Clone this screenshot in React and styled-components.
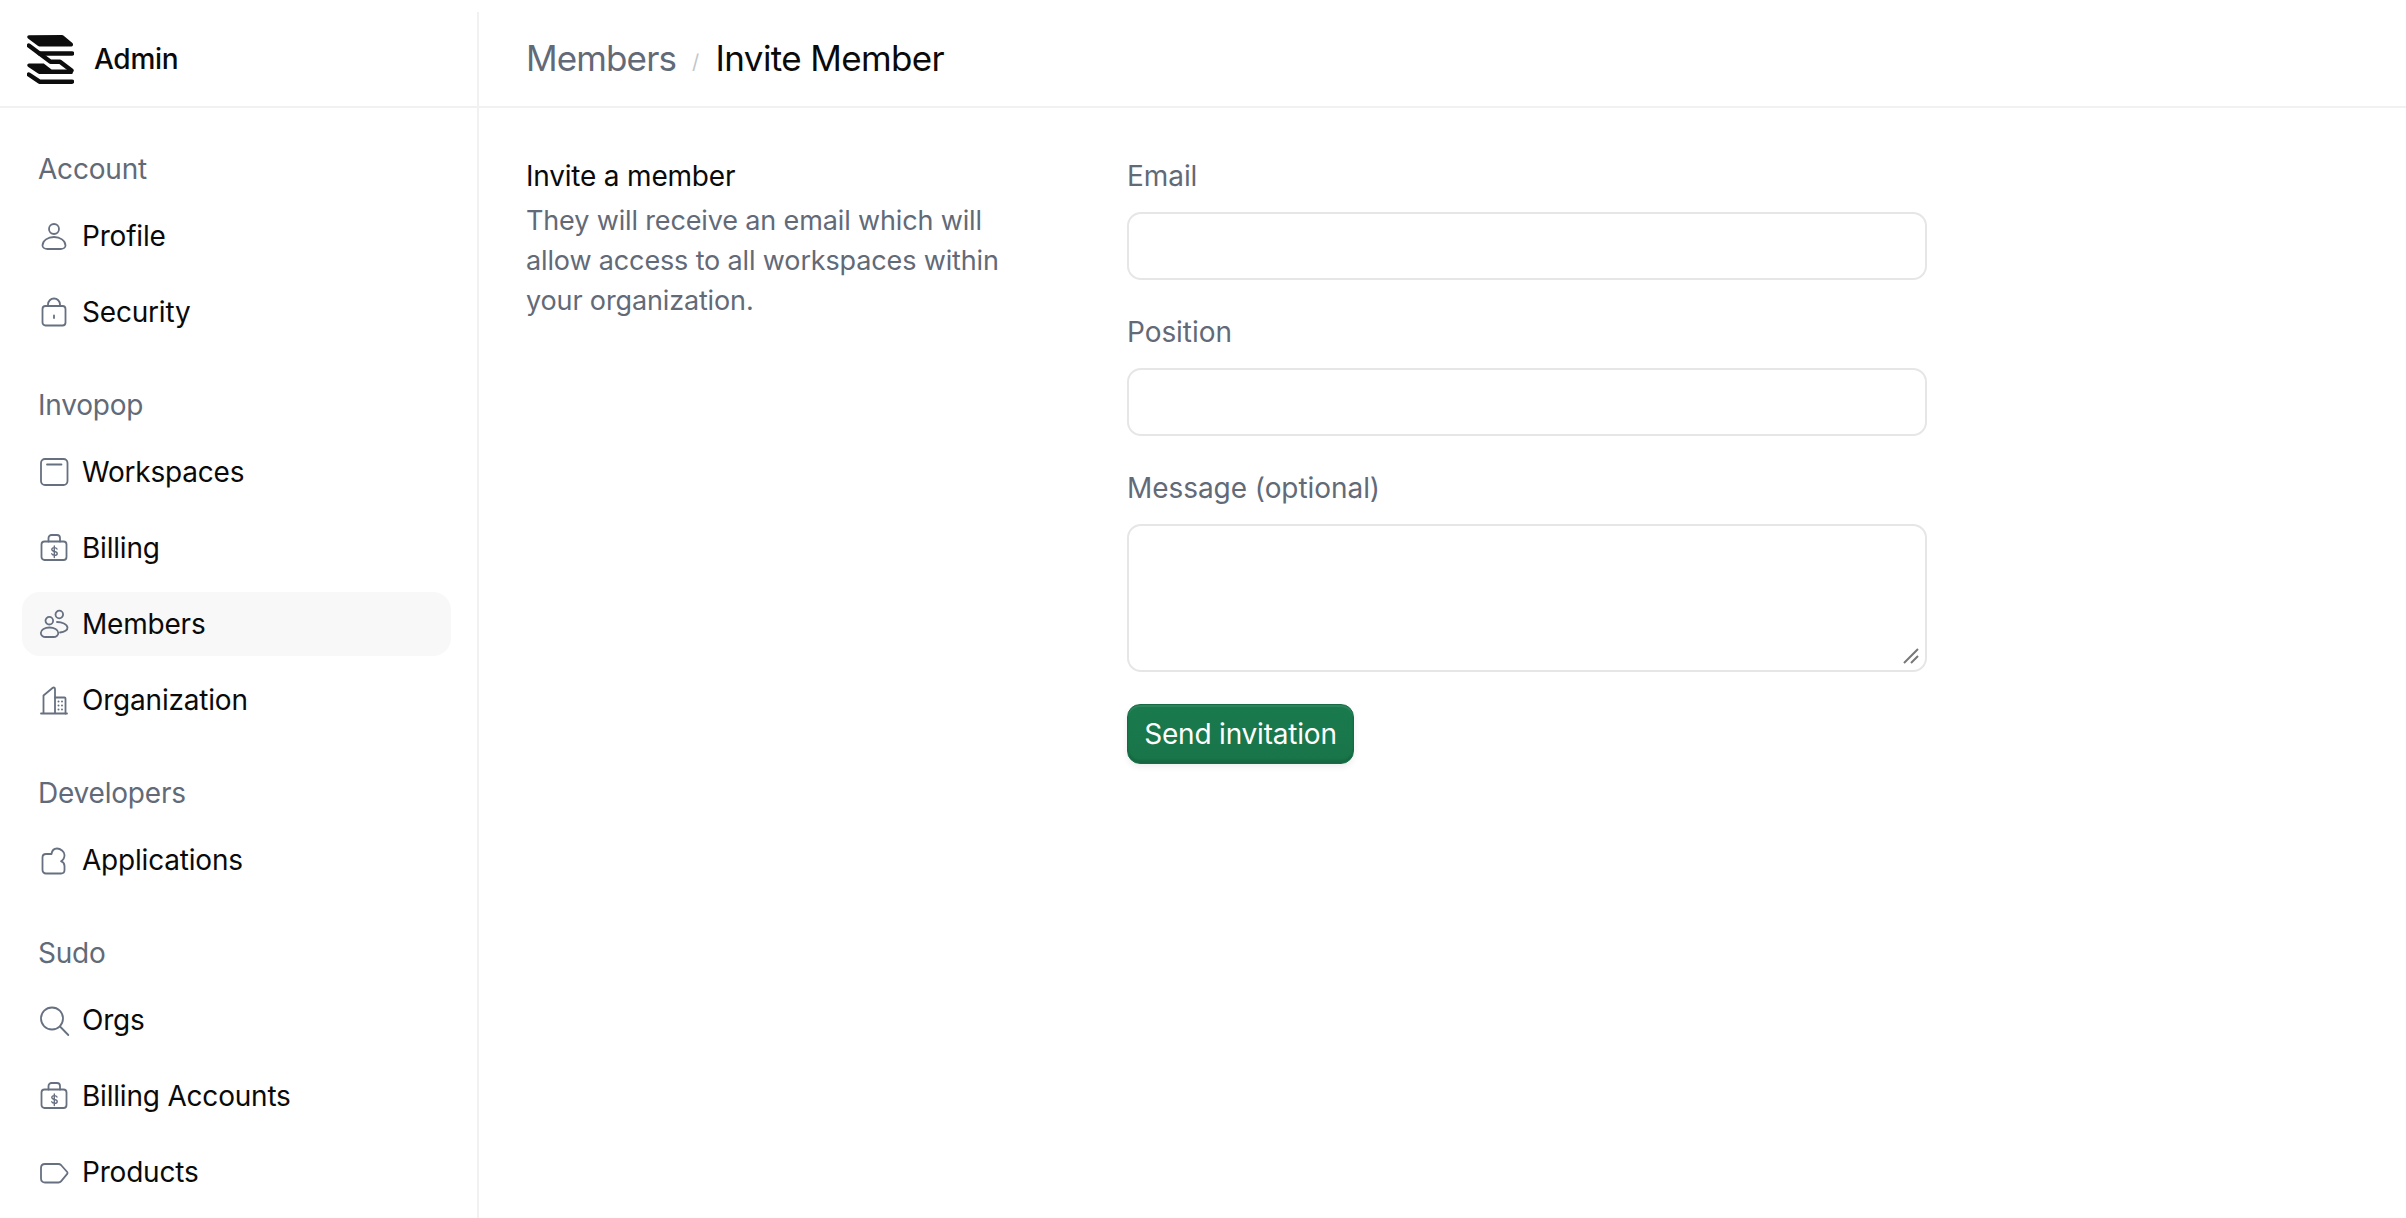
import React from "react";
import styled, { createGlobalStyle } from "styled-components";

const Global = createGlobalStyle`
  html, body { margin: 0; padding: 0; background: #fff; }
  body { font-family: Inter, "Liberation Sans", sans-serif; color: #0a0a0a; overflow: hidden; }
  * { box-sizing: border-box; }
`;

const Page = styled.div`
  display: flex;
  height: 1218px;
  overflow: hidden;
`;
const Sidebar = styled.aside`
  flex: 0 0 479px;
  margin-top: 12px;
  border-right: 2px solid #f1f1f2;
`;
const Brand = styled.div`
  height: 96px;
  padding: 23px 0 0 27px;
  display: flex;
  align-items: flex-start;
  gap: 20px;
  border-bottom: 2px solid #f1f1f2;
`;
const BrandName = styled.span`
  font-size: 28px;
  font-weight: 500;
  line-height: 48px;
  letter-spacing: -0.01em;
`;
const Nav = styled.nav`
  padding: 44px 26px 0 22px;
  display: flex;
  flex-direction: column;
  gap: 44px;
`;
const Section = styled.section`
  display: flex;
  flex-direction: column;
  gap: 12px;
`;
const SectionLabel = styled.div`
  height: 32px;
  line-height: 34px;
  padding-left: 16px;
  font-size: 28px;
  letter-spacing: -0.2px;
  color: #626a78;
  margin-bottom: 8px;
`;
const Item = styled.a`
  height: 64px;
  display: flex;
  align-items: center;
  gap: 14px;
  padding-left: 18px;
  border-radius: 18px;
  font-size: 28px;
  letter-spacing: -0.2px;
  color: #0a0a0a;
  background: ${(p) => (p.$active ? "#f8f8f8" : "transparent")};
`;
const Glyph = styled.svg`
  width: 28px;
  height: 28px;
  flex: none;
  fill: none;
  overflow: visible;
  stroke: #667080;
  stroke-width: 1.8;
  stroke-linecap: round;
  stroke-linejoin: round;
`;
const Main = styled.main`
  flex: 1;
  min-width: 0;
`;
const Topbar = styled.header`
  height: 108px;
  padding: 10px 47px 0;
  display: flex;
  align-items: center;
  border-bottom: 2px solid #f1f1f2;
  font-size: 35px;
  letter-spacing: -0.02em;
`;
const Crumb = styled.span`
  color: ${(p) => (p.$current ? "#0a0a0a" : "#626a78")};
  letter-spacing: ${(p) => (p.$current ? "-0.018em" : "-0.025em")};
`;
const Slash = styled.span`
  margin: 0 17px 0 16px;
  font-size: 20px;
  color: #c3c6cc;
  padding-top: 8px;
`;
const Content = styled.div`
  padding: 50px 47px 0;
  display: flex;
`;
const Intro = styled.div`
  flex: 0 0 601px;
`;
const IntroTitle = styled.h2`
  margin: 0;
  font-size: 28px;
  font-weight: 400;
  letter-spacing: -0.2px;
  line-height: 36px;
`;
const IntroText = styled.p`
  margin: 7px 0 0;
  width: 500px;
  font-size: 27px;
  letter-spacing: -0.14px;
  line-height: 40px;
  color: #626a78;
`;
const Form = styled.form`
  width: 800px;
  display: flex;
  flex-direction: column;
`;
const Label = styled.label`
  display: block;
  font-size: 28px;
  line-height: 36px;
  letter-spacing: -0.06px;
  color: #626a78;
  margin-bottom: 18px;
`;
const Field = styled.input`
  display: block;
  width: 100%;
  height: 68px;
  margin-bottom: 34px;
  border: 2px solid #e6e6e7;
  border-radius: 14px;
  background: #fff;
  outline: none;
`;
const AreaWrap = styled.div`
  position: relative;
  margin-bottom: 32px;
`;
const Area = styled.textarea`
  display: block;
  width: 100%;
  height: 148px;
  border: 2px solid #e6e6e7;
  border-radius: 14px;
  background: #fff;
  outline: none;
  resize: none;
`;
const Grip = styled.svg`
  position: absolute;
  right: 8px;
  bottom: 8px;
  width: 16px;
  height: 16px;
  stroke: #787878;
  stroke-width: 2;
  fill: none;
`;
const Submit = styled.button`
  align-self: flex-start;
  height: 60px;
  width: 227px;
  padding: 0;
  border: 1px solid #176b44;
  border-radius: 13px;
  background: linear-gradient(#197a4e, #187549);
  box-shadow: inset 0 2px 0 rgba(255, 255, 255, 0.08), inset 0 -3px 2px rgba(0, 0, 0, 0.12), 0 3px 6px rgba(0, 0, 0, 0.07);
  color: #fff;
  font-family: inherit;
  font-size: 28px;
  letter-spacing: -0.2px;
`;

const icons = {
  user: (
    <>
      <circle cx="14" cy="7" r="5" />
      <path d="M14 15c-6 0-11.500 3.500-11.500 8.500 0 2.200 2.500 3.500 5 3.500h13c2.500 0 5-1.300 5-3.500 0-5-5.500-8.500-11.500-8.500Z" />
    </>
  ),
  lock: (
    <>
      <rect x="2.500" y="8" width="23" height="19.500" rx="3" />
      <path d="M8 8V6.500a6 6 0 0 1 12 0V8M14 17.500v2.500" />
    </>
  ),
  window: (
    <>
      <rect x="1" y="1" width="26.500" height="26" rx="4" />
      <path d="M7 6.500h14.500" />
    </>
  ),
  billing: (
    <>
      <rect x="1.500" y="7.500" width="25" height="18.500" rx="3" />
      <path d="M8.500 7.500V4a3 3 0 0 1 3-3h5.500a3 3 0 0 1 3 3v3.500" />
      <path d="M17 15c-.5-1-1.500-1.400-2.700-1.400-1.500 0-2.500.7-2.500 1.900 0 2.600 5.400 1.300 5.400 3.900 0 1.200-1.200 1.900-2.700 1.900-1.200 0-2.300-.5-2.800-1.500M14.300 12v11.500" strokeWidth="1.400" />
    </>
  ),
  people: (
    <>
      <circle cx="19.300" cy="4.500" r="3.800" />
      <circle cx="9.300" cy="10.700" r="3.800" />
      <path d="M9.500 17.500c-4.500 0-8.700 2.200-8.700 5.500 0 2.500 2.500 4 4.500 4h8.500c2 0 4.500-1.500 4.500-4 0-3.300-4.300-5.500-8.800-5.500Z" />
      <path d="M17 12c5 0 10 2 10.500 5.500.3 2.500-3 4.500-7.500 5" />
    </>
  ),
  org: (
    <>
      <path d="M1 27.500h26M3.500 27.500V9.500L12.500 2c1.200-1 2.500-.4 2.500 1v24.500" />
      <path d="M15 11.500h9.500a1 1 0 0 1 1 1v15" />
      <path d="M18.500 15.500v.1M22 15.500v.1M18.500 19.500v.1M22 19.500v.1M18.500 23.500v.1M22 23.500v.1" strokeWidth="2" />
    </>
  ),
  app: (
    <path d="M6 8h5.500c.5-3.500 2.500-5.500 5.500-5.500 3.500 0 7.500 3 7.500 6.500 0 2.500-1 5-3.500 6.200 2.500 1 3.500 2.800 3.500 4.800v4c0 1.800-1.200 3.500-3.500 3.500H6c-2 0-3.500-1.500-3.500-3.500V11.500C2.500 9.500 4 8 6 8Z" />
  ),
  search: (
    <>
      <circle cx="12" cy="12.500" r="11" />
      <path d="M20 20.500 28.300 29" />
    </>
  ),
  tag: (
    <path d="M5 6h13.500c1 0 1.800.4 2.500 1l6.200 7c.5.600.5 1.300 0 1.900l-6.200 7.500c-.6.700-1.500 1.100-2.500 1.100H5c-2.500 0-4-1.500-4-4V10c0-2.500 1.500-4 4-4Z" />
  ),
};

const Icon = ({ name }) => <Glyph viewBox="0 0 28 28">{icons[name]}</Glyph>;

const Logo = () => (
  <svg width="47" height="50" viewBox="0 0 47 50" fill="#0d0d0d">
    <path d="M2 .3 35 0c.6 0 1 .2 1.400.5l9 7.500c1.200 1 .6 3.500-1 3.500H12.500c-.6 0-1-.1-1.400-.4L1 3.500C-.4 2.500.3.300 2 .3Z" />
    <path d="M1.800 10.500 12.500 18.500H45" fill="none" stroke="#0d0d0d" strokeWidth="4.400" strokeLinecap="round" strokeLinejoin="round" />
    <path d="M12.500 18.500 23.500 26.700h9.500L44.500 35.500" fill="none" stroke="#0d0d0d" strokeWidth="4.400" strokeLinecap="round" strokeLinejoin="round" />
    <path d="M2 28.500h14c.6 0 1 .1 1.400.4l6.500 5.100c.5.400.9.600 1.600.6H44.500c1.700 0 2 4.400 0 4.400H12.500c-.6 0-1-.1-1.400-.4L1 31.800C-.4 30.800.3 28.500 2 28.500Z" />
    <path d="M1.800 39.500 12.500 46.700H45" fill="none" stroke="#0d0d0d" strokeWidth="4.400" strokeLinecap="round" strokeLinejoin="round" />
  </svg>
);

const sections = [
  { title: "Account", items: [["user", "Profile"], ["lock", "Security"]] },
  { title: "Invopop", items: [["window", "Workspaces"], ["billing", "Billing"], ["people", "Members", true], ["org", "Organization"]] },
  { title: "Developers", items: [["app", "Applications"]] },
  { title: "Sudo", items: [["search", "Orgs"], ["billing", "Billing Accounts"], ["tag", "Products"]] },
];

export default function App() {
  return (
    <>
      <Global />
      <Page>
        <Sidebar>
          <Brand>
            <Logo />
            <BrandName>Admin</BrandName>
          </Brand>
          <Nav>
            {sections.map((s) => (
              <Section key={s.title}>
                <SectionLabel>{s.title}</SectionLabel>
                {s.items.map(([icon, text, active]) => (
                  <Item key={text} $active={active}>
                    <Icon name={icon} />
                    {text}
                  </Item>
                ))}
              </Section>
            ))}
          </Nav>
        </Sidebar>
        <Main>
          <Topbar>
            <Crumb>Members</Crumb>
            <Slash>/</Slash>
            <Crumb $current>Invite Member</Crumb>
          </Topbar>
          <Content>
            <Intro>
              <IntroTitle>Invite a member</IntroTitle>
              <IntroText>They will receive an email which will allow access to all workspaces within your organization.</IntroText>
            </Intro>
            <Form>
              <Label>Email</Label>
              <Field />
              <Label>Position</Label>
              <Field />
              <Label>Message (optional)</Label>
              <AreaWrap>
                <Area />
                <Grip viewBox="0 0 16 16">
                  <path d="M1 15 15 1M8 15 15 8" />
                </Grip>
              </AreaWrap>
              <Submit type="button">Send invitation</Submit>
            </Form>
          </Content>
        </Main>
      </Page>
    </>
  );
}
